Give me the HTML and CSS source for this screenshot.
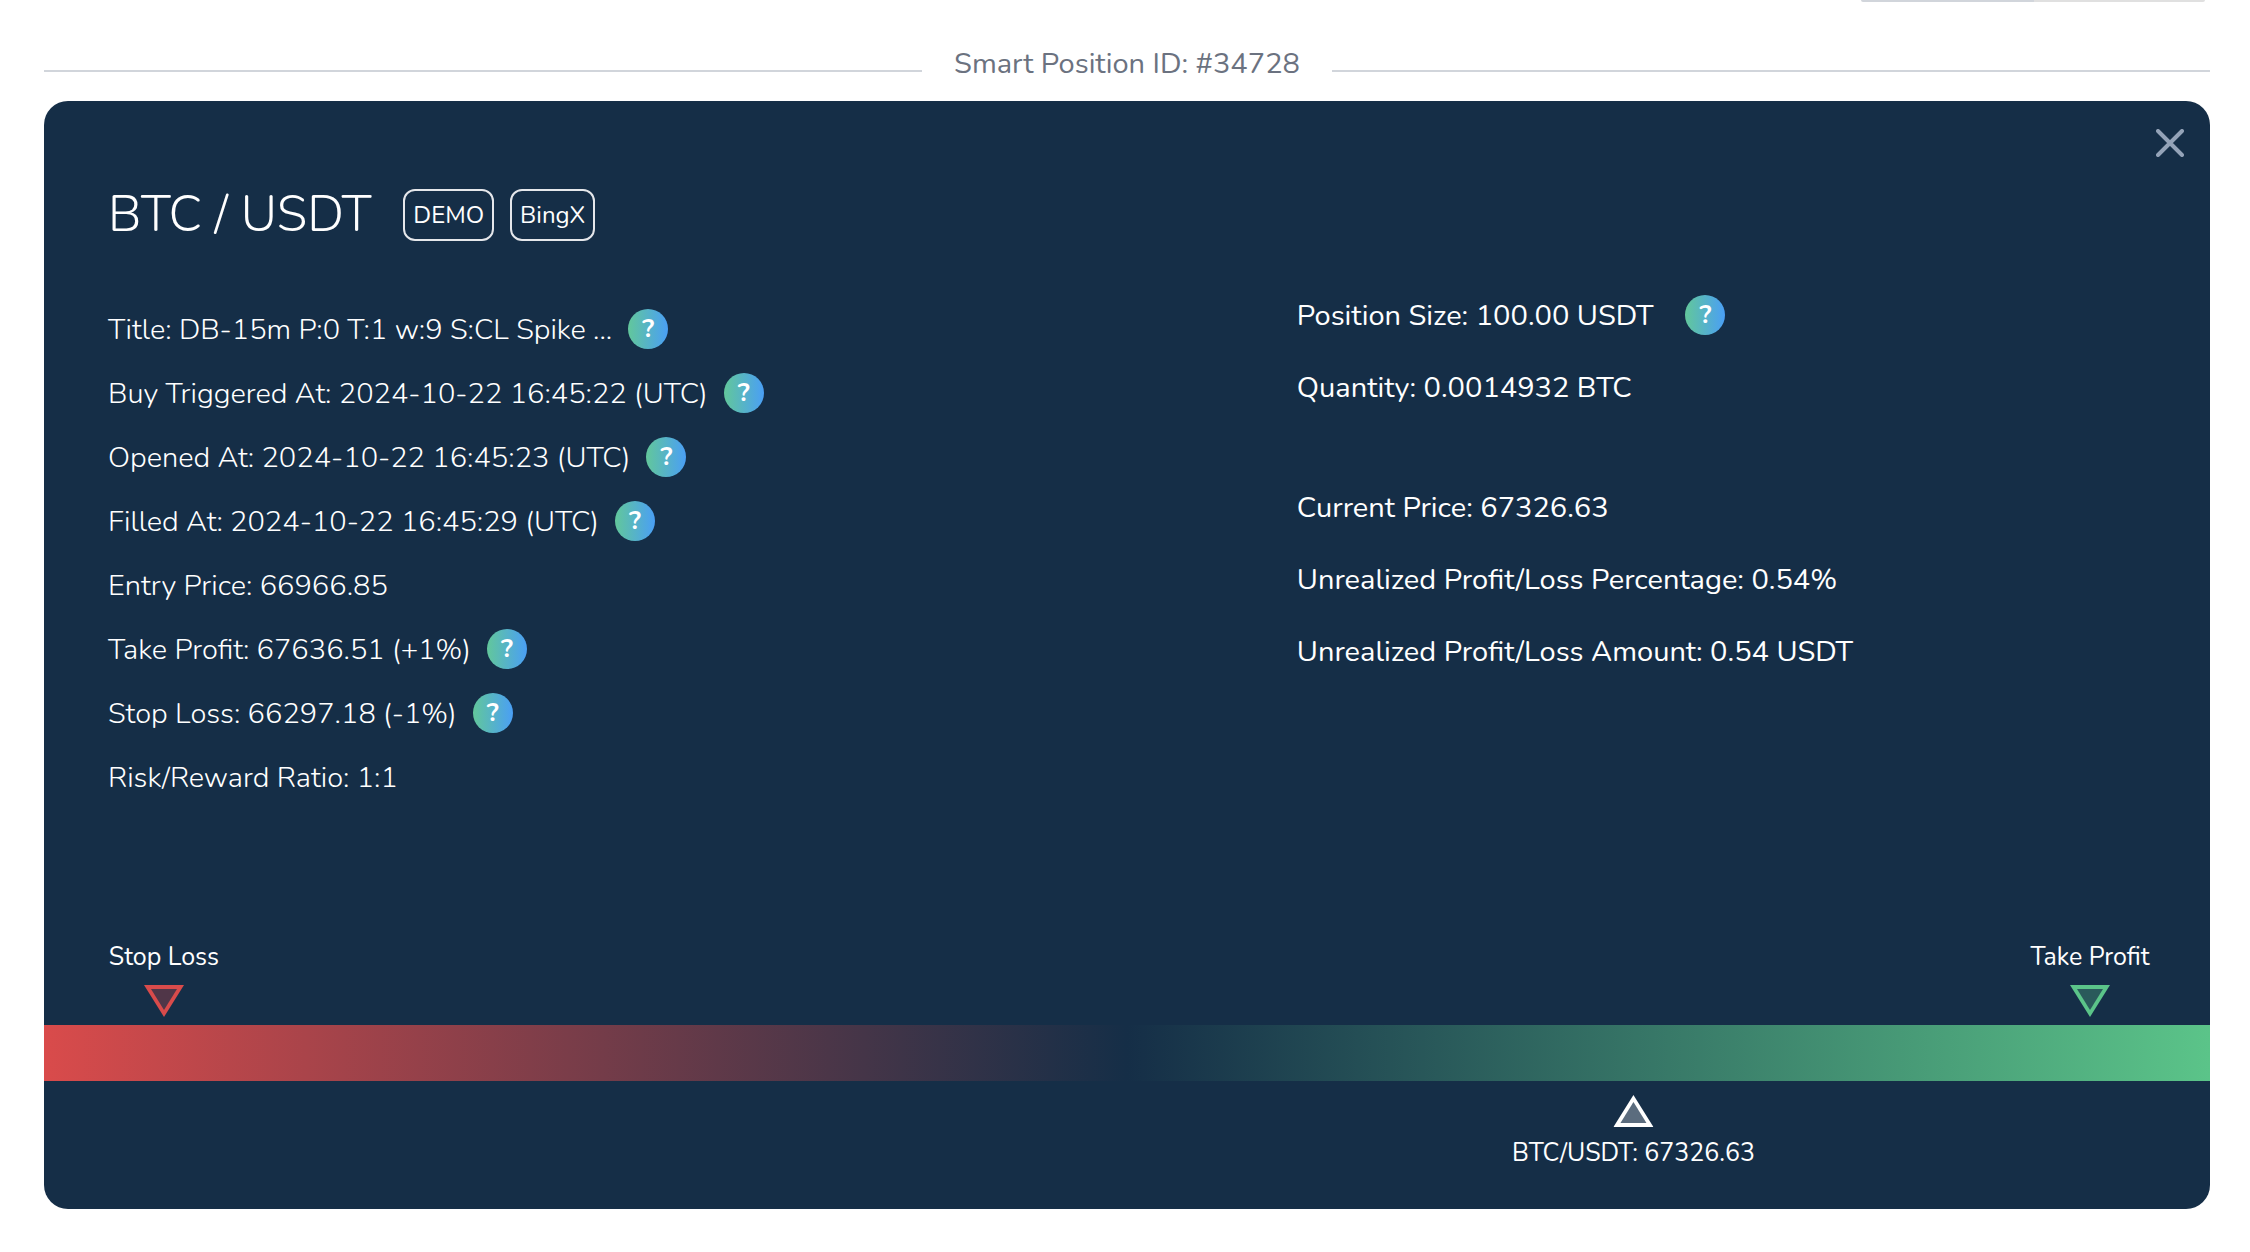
FILE: index.html
```html
<!DOCTYPE html>
<html lang="en">
<head>
    <meta charset="UTF-8">
    <meta name="viewport" content="width=device-width, initial-scale=1.0">
    <title>Smart Position #34728</title>
    <link rel="stylesheet" href="styles.css">
</head>
<body>
    <div class="tabs-edge">
        <span class="tab active"></span>
        <span class="tab"></span>
    </div>

    <main class="container">
        <div class="divider">
            <span>Smart Position ID: #34728</span>
        </div>

        <section class="card">
            <button type="button" class="close-btn" aria-label="Close">
                <svg viewBox="0 0 28 28" width="28" height="28">
                    <path d="M2 2L26 26M26 2L2 26"></path>
                </svg>
            </button>

            <div class="card-header">
                <h1>BTC / USDT</h1>
                <div class="badges">
                    <span class="badge">DEMO</span>
                    <span class="badge">BingX</span>
                </div>
            </div>

            <div class="details">
                <ul class="info">
                    <li>Title: DB-15m P:0 T:1 w:9 S:CL Spike ... <button type="button" class="help" aria-label="About title">?</button></li>
                    <li>Buy Triggered At: 2024-10-22 16:45:22 (UTC) <button type="button" class="help" aria-label="About buy trigger">?</button></li>
                    <li>Opened At: 2024-10-22 16:45:23 (UTC) <button type="button" class="help" aria-label="About opened time">?</button></li>
                    <li>Filled At: 2024-10-22 16:45:29 (UTC) <button type="button" class="help" aria-label="About filled time">?</button></li>
                    <li>Entry Price: 66966.85</li>
                    <li>Take Profit: 67636.51 (+1%) <button type="button" class="help" aria-label="About take profit">?</button></li>
                    <li>Stop Loss: 66297.18 (-1%) <button type="button" class="help" aria-label="About stop loss">?</button></li>
                    <li>Risk/Reward Ratio: 1:1</li>
                </ul>

                <div class="summary">
                    <ul>
                        <li>Position Size: 100.00 USDT <button type="button" class="help" aria-label="About position size">?</button></li>
                        <li>Quantity: 0.0014932 BTC</li>
                    </ul>
                    <ul>
                        <li>Current Price: 67326.63</li>
                        <li>Unrealized Profit/Loss Percentage: 0.54%</li>
                        <li>Unrealized Profit/Loss Amount: 0.54 USDT</li>
                    </ul>
                </div>
            </div>

            <div class="range">
                <div class="limits">
                    <div class="marker stop">
                        <span>Stop Loss</span>
                        <svg viewBox="0 0 40 32" width="40" height="32">
                            <path class="edge" d="M0 0H40L20 32Z"></path>
                            <path class="inner" d="M7 4H33L20 25Z"></path>
                        </svg>
                    </div>
                    <div class="marker profit">
                        <span>Take Profit</span>
                        <svg viewBox="0 0 40 32" width="40" height="32">
                            <path class="edge" d="M0 0H40L20 32Z"></path>
                            <path class="inner" d="M7 4H33L20 25Z"></path>
                        </svg>
                    </div>
                </div>
                <div class="bar"></div>
                <div class="track">
                    <div class="marker current" style="left: 76.3%">
                        <svg viewBox="0 0 40 32" width="40" height="32">
                            <path class="edge" d="M0 32H40L20 0Z"></path>
                            <path class="inner" d="M7 28H33L20 7Z"></path>
                        </svg>
                        <span>BTC/USDT: 67326.63</span>
                    </div>
                </div>
            </div>
        </section>
    </main>
</body>
</html>
```
FILE: styles.css
```css
* {
    box-sizing: border-box;
}
body {
    margin: 0;
    background-color: #fff;
    color: #fff;
    font-family: Nunito, Lato, sans-serif;
    font-size: 29px;
}
h1, ul {
    margin: 0;
    padding: 0;
}
ul {
    list-style: none;
}
.tabs-edge {
    display: flex;
    justify-content: flex-end;
    padding-right: 45px;
}
.tab {
    width: 171px;
    height: 2px;
    background-color: #e0e0e0;
    border-radius: 0 0 4px 0;
}
.tab.active {
    width: 173px;
    background-color: #d1d5db;
    border-radius: 0 0 0 4px;
}
.container {
    margin: 0 40px 0 44px;
}
.divider {
    display: flex;
    align-items: center;
    gap: 32px;
    padding: 42px 0 17px;
    color: #6b7280;
    line-height: 40px;
}
.divider::before,
.divider::after {
    content: "";
    flex: 1;
    height: 2px;
    margin-top: 14px;
    background-color: #d1d5db;
}
.card {
    position: relative;
    padding-top: 76px;
    background-color: #152e47;
    border-radius: 24px;
    overflow: hidden;
}
.close-btn {
    position: absolute;
    top: 28px;
    right: 26px;
    display: flex;
    padding: 0;
    background: none;
    border: none;
    cursor: pointer;
}
.close-btn path {
    stroke: #94a3b8;
    stroke-width: 4;
    stroke-linecap: round;
}
.card-header {
    display: flex;
    align-items: center;
    gap: 32px;
    padding: 0 64px;
}
h1 {
    font-size: 50px;
    font-weight: 300;
    line-height: 76px;
}
.badges {
    display: flex;
    gap: 16px;
}
.badge {
    height: 52px;
    padding: 0 8px;
    border: 2px solid #e5e7eb;
    border-radius: 12px;
    font-size: 24px;
    line-height: 48px;
}
.details {
    display: grid;
    grid-template-columns: 7fr 5fr;
    padding: 26px 64px 0;
}
li {
    display: flex;
    align-items: center;
    gap: 16px;
}
.info {
    padding-top: 18px;
    font-weight: 300;
}
.info li {
    height: 64px;
}
.summary li {
    height: 72px;
    gap: 32px;
}
.summary ul + ul {
    margin-top: 48px;
}
.help {
    width: 40px;
    height: 40px;
    padding: 0;
    background: linear-gradient(to right, #62c79b, #4a9ff5);
    border: none;
    border-radius: 50%;
    color: #fff;
    font-family: inherit;
    font-size: 26px;
    font-weight: bold;
    line-height: 40px;
    cursor: pointer;
}
.range {
    padding-top: 130px;
    font-size: 25px;
}
.limits {
    display: flex;
    justify-content: space-between;
    padding: 0 20px 8px;
}
.marker {
    display: flex;
    flex-direction: column;
    align-items: center;
    width: 200px;
    line-height: 36px;
    white-space: nowrap;
}
.limits .marker {
    gap: 10px;
}
.stop {
    fill: #d94b4b;
}
.profit {
    fill: #5bc489;
}
.current {
    position: absolute;
    top: 14px;
    width: auto;
    gap: 8px;
    fill: #fff;
    transform: translateX(-50%);
}
.marker .inner {
    fill: #152e47;
    fill-opacity: 0.7;
}
.bar {
    height: 56px;
    background: linear-gradient(to right, #d94b4b, #152e47 50%, #5bc489);
}
.track {
    position: relative;
    height: 128px;
    margin: 0 120px;
}
```
